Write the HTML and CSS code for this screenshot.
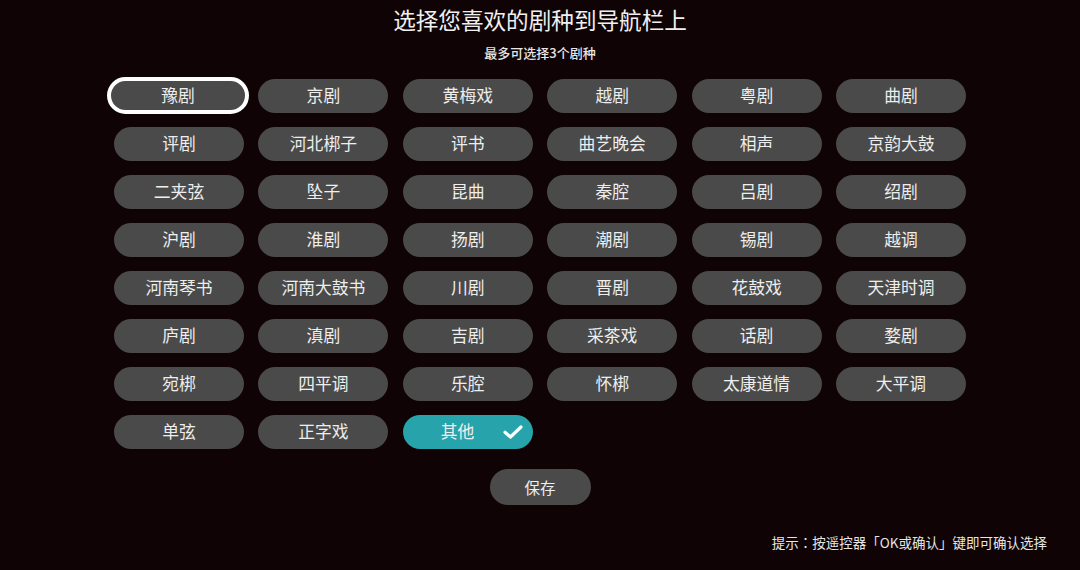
FILE: index.html
```html
<!DOCTYPE html>
<html lang="zh-CN">
<head>
<meta charset="utf-8">
<title>选择剧种</title>
<link rel="stylesheet" href="styles.css">
</head>
<body>
<div class="page">
  <h1 class="title">选择您喜欢的剧种到导航栏上</h1>
  <p class="subtitle">最多可选择3个剧种</p>
  <div class="grid">
    <div class="chip focused">豫剧</div>
    <div class="chip">京剧</div>
    <div class="chip">黄梅戏</div>
    <div class="chip">越剧</div>
    <div class="chip">粤剧</div>
    <div class="chip">曲剧</div>
    <div class="chip">评剧</div>
    <div class="chip">河北梆子</div>
    <div class="chip">评书</div>
    <div class="chip">曲艺晚会</div>
    <div class="chip">相声</div>
    <div class="chip">京韵大鼓</div>
    <div class="chip">二夹弦</div>
    <div class="chip">坠子</div>
    <div class="chip">昆曲</div>
    <div class="chip">秦腔</div>
    <div class="chip">吕剧</div>
    <div class="chip">绍剧</div>
    <div class="chip">沪剧</div>
    <div class="chip">淮剧</div>
    <div class="chip">扬剧</div>
    <div class="chip">潮剧</div>
    <div class="chip">锡剧</div>
    <div class="chip">越调</div>
    <div class="chip">河南琴书</div>
    <div class="chip">河南大鼓书</div>
    <div class="chip">川剧</div>
    <div class="chip">晋剧</div>
    <div class="chip">花鼓戏</div>
    <div class="chip">天津时调</div>
    <div class="chip">庐剧</div>
    <div class="chip">滇剧</div>
    <div class="chip">吉剧</div>
    <div class="chip">采茶戏</div>
    <div class="chip">话剧</div>
    <div class="chip">婺剧</div>
    <div class="chip">宛梆</div>
    <div class="chip">四平调</div>
    <div class="chip">乐腔</div>
    <div class="chip">怀梆</div>
    <div class="chip">太康道情</div>
    <div class="chip">大平调</div>
    <div class="chip">单弦</div>
    <div class="chip">正字戏</div>
    <div class="chip selected"><span class="sel-label">其他</span><svg class="check" viewBox="0 0 20 14" width="20" height="14"><path d="M2 7.2 L7.4 12 L18 2" fill="none" stroke="#ffffff" stroke-width="3.2" stroke-linecap="round" stroke-linejoin="round"/></svg></div>
  </div>
  <div class="actions">
    <div class="save">保存</div>
  </div>
  <p class="hint">提示<span class="colon" lang="zh-TW">：</span>按遥控器「OK或确认」键即可确认选择</p>
</div>
</body>
</html>
```

FILE: styles.css
```css
html, body {
  margin: 0;
  padding: 0;
  background: #0f0305;
  height: 100%;
}

body {
  font-family: "Noto Sans CJK SC", "Noto Sans", sans-serif;
  color: #ececec;
}

.page {
  width: 1080px;
  height: 570px;
  overflow: hidden;
}

.title {
  margin: 5px 0 0;
  font-size: 22.6px;
  font-weight: 400;
  line-height: 30px;
  text-align: center;
  color: #f0f0f0;
}

.subtitle {
  margin: 8px 0 0;
  font-size: 13px;
  font-weight: 500;
  line-height: 20px;
  text-align: center;
  color: #e6e6e6;
}

.grid {
  margin: 16px auto 0;
  width: 852px;
  display: grid;
  grid-template-columns: repeat(6, 130px);
  grid-auto-rows: 34px;
  column-gap: 14.4px;
  row-gap: 14px;
}

.chip {
  position: relative;
  box-sizing: border-box;
  display: flex;
  align-items: center;
  justify-content: center;
  padding-bottom: 1px;
  background: #4a4a4a;
  border-radius: 17px;
  font-size: 16.8px;
  line-height: 1;
  color: #eeeeee;
}

.chip.focused {
  width: 142px;
  height: 37px;
  margin: -2px -5px -1px -7px;
  border: 4px solid #ffffff;
  border-radius: 19px;
}

.chip.selected {
  background: #27a4ab;
  justify-content: flex-start;
  padding-left: 38px;
}

.check {
  position: absolute;
  right: 10px;
  top: 10px;
}

.actions {
  display: flex;
  justify-content: center;
  margin-top: 20px;
}

.save {
  width: 101px;
  height: 36px;
  border-radius: 18px;
  background: #4a4a4a;
  display: flex;
  align-items: center;
  justify-content: center;
  font-size: 15.5px;
  color: #eeeeee;
}

.hint {
  margin: 27px 33px 0 0;
  text-align: right;
  font-size: 13.5px;
  line-height: 20px;
  color: #e6e6e6;
}

.colon {
  font-family: "Noto Sans CJK TC", "Noto Sans CJK SC", sans-serif;
}
```
